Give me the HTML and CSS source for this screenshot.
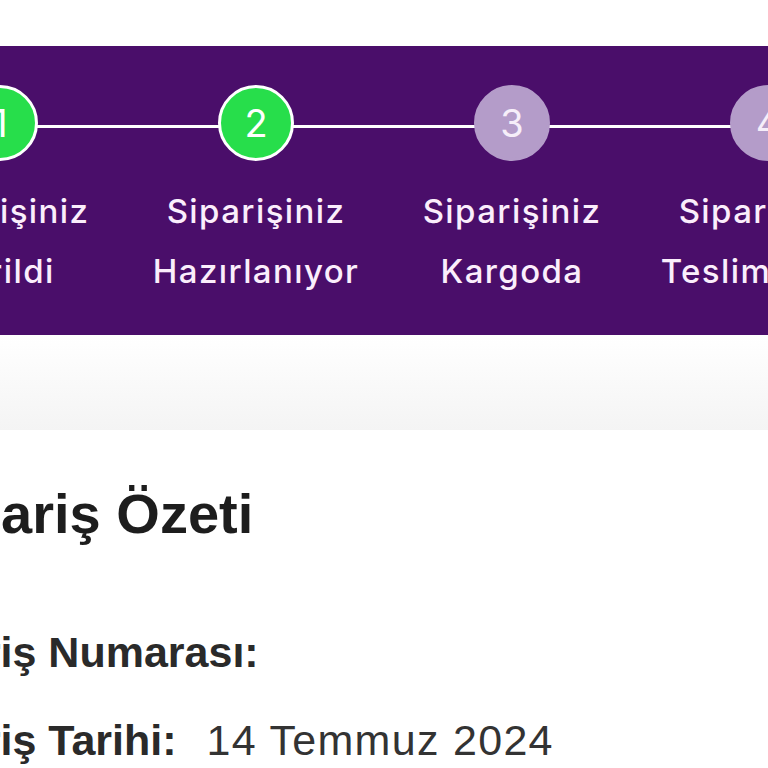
FILE: index.html
```html
<!DOCTYPE html>
<html lang="tr">
<head>
  <meta charset="UTF-8">
  <title>Sipariş Takibi</title>
  <link rel="stylesheet" href="styles.css">
</head>
<body>
  <div class="topbar"></div>

  <div class="steps">
    <div class="step-row">
      <div class="step done">
        <div class="circle">1</div>
        <div class="step-label">Siparişiniz<br>Verildi</div>
      </div>
      <div class="step done">
        <div class="circle">2</div>
        <div class="step-label">Siparişiniz<br>Hazırlanıyor</div>
      </div>
      <div class="step">
        <div class="circle">3</div>
        <div class="step-label">Siparişiniz<br>Kargoda</div>
      </div>
      <div class="step">
        <div class="circle">4</div>
        <div class="step-label">Siparişiniz<br>Teslim Edildi</div>
      </div>
    </div>
  </div>

  <div class="fade"></div>

  <div class="summary">
    <h2>Sipariş Özeti</h2>
    <div class="rows">
      <div class="row">
        <span class="label">Sipariş Numarası:</span>
        <span class="value"></span>
      </div>
      <div class="row">
        <span class="label">Sipariş Tarihi:</span>
        <span class="value">14 Temmuz 2024</span>
      </div>
    </div>
  </div>
</body>
</html>
```

FILE: styles.css
```css
body {
  margin: 0;
  background: #fff;
  overflow: hidden;
  font-family: "Liberation Sans", Arial, sans-serif;
}

.topbar {
  height: 46px;
}

/* mor adım şeridi */
.steps {
  background: #4a0e6a;
  height: 289px;
  padding-top: 39px;
  box-sizing: border-box;
  overflow: hidden;
}

.step-row {
  display: grid;
  grid-template-columns: repeat(4, 256px);
  width: 1024px;
  margin-left: -128px;
  background: linear-gradient(#fff, #fff) 0 40px / 100% 3px no-repeat;
}

.step {
  display: flex;
  flex-direction: column;
  align-items: center;
}

.circle {
  width: 76px;
  height: 76px;
  border-radius: 50%;
  box-sizing: border-box;
  background: #b49cc9;
  border: 3px solid #b49cc9;
  color: #f6eef9;
  font-family: Inter, sans-serif;
  font-size: 38px;
  display: flex;
  align-items: center;
  justify-content: center;
}

.step.done .circle {
  background: #27de4b;
  border-color: #fff;
  color: #fff;
}

.step-label {
  margin-top: 20px;
  font-family: Inter, sans-serif;
  font-size: 33px;
  font-weight: 500;
  line-height: 60px;
  letter-spacing: 1.4px;
  color: #fbeefc;
  text-align: center;
  white-space: nowrap;
}

.fade {
  height: 95px;
  background: linear-gradient(#fff, #f4f4f4);
}

/* özet */
.summary {
  padding-top: 52px;
}

.summary h2 {
  margin: 0 0 0 -86px;
  font-size: 56px;
  line-height: 64px;
  font-weight: bold;
  color: #1d1d1d;
}

.rows {
  display: flex;
  flex-direction: column;
  gap: 40px;
  margin-top: 82px;
  margin-left: -107px;
}

.row {
  display: flex;
  gap: 30px;
  font-size: 43px;
  line-height: 48px;
  white-space: nowrap;
}

.label {
  font-weight: bold;
  color: #2a2a2a;
}

.value {
  color: #333;
  letter-spacing: 1.3px;
}
```
